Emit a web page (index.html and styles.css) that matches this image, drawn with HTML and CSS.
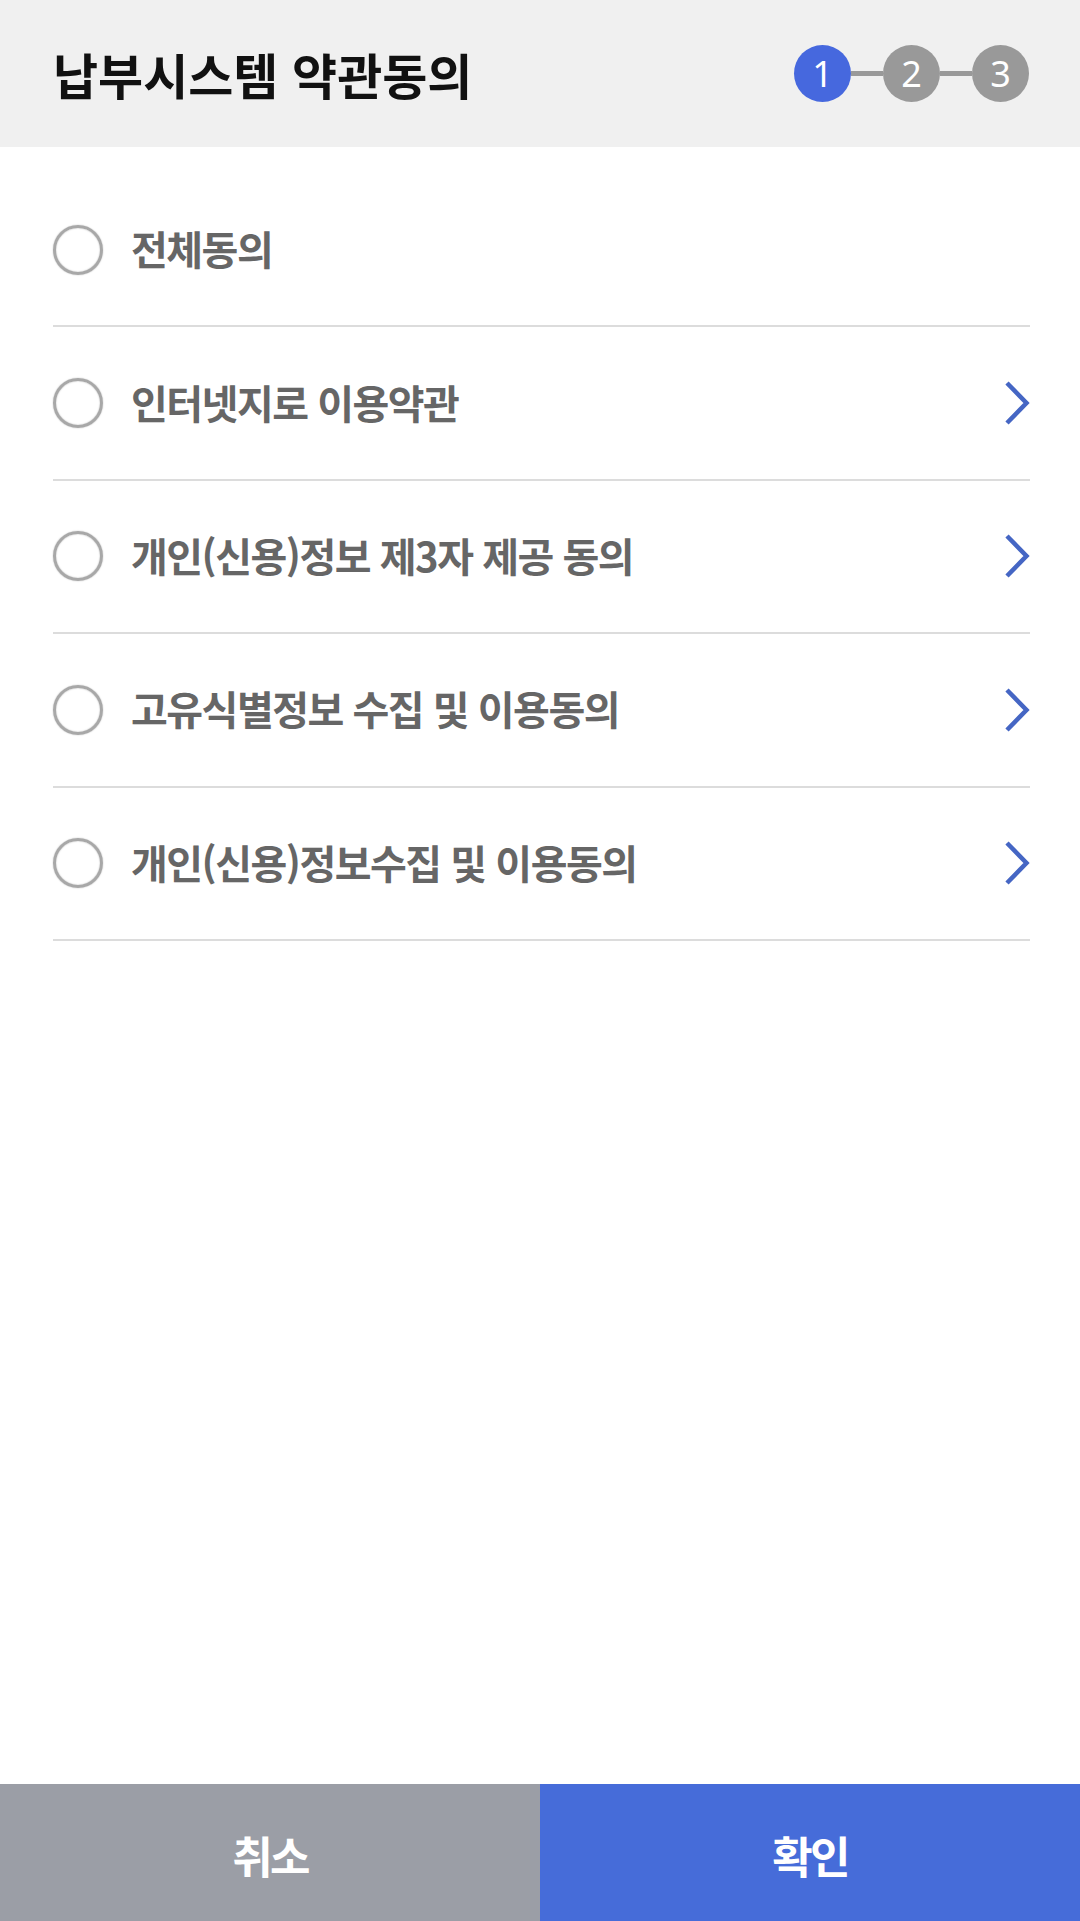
FILE: index.html
```html
<!DOCTYPE html>
<html lang="ko">
<head>
<meta charset="utf-8">
<title>납부시스템 약관동의</title>
<link rel="stylesheet" href="styles.css">
</head>
<body>
<div class="page">
  <header class="header">
    <h1 class="title">납부시스템 약관동의</h1>
    <div class="steps">
      <span class="step active">1</span>
      <span class="step-line"></span>
      <span class="step">2</span>
      <span class="step-line"></span>
      <span class="step">3</span>
    </div>
  </header>
  <main class="list">
    <div class="row">
      <span class="radio"></span>
      <span class="label">전체동의</span>
    </div>
    <div class="row">
      <span class="radio"></span>
      <span class="label">인터넷지로 이용약관</span>
      <svg class="chev" viewBox="0 0 26 46" width="26" height="46"><polyline points="3,3 22.5,23 3,43" fill="none" stroke="#4566c4" stroke-width="4.5"/></svg>
    </div>
    <div class="row">
      <span class="radio"></span>
      <span class="label">개인(신용)정보 제3자 제공 동의</span>
      <svg class="chev" viewBox="0 0 26 46" width="26" height="46"><polyline points="3,3 22.5,23 3,43" fill="none" stroke="#4566c4" stroke-width="4.5"/></svg>
    </div>
    <div class="row">
      <span class="radio"></span>
      <span class="label">고유식별정보 수집 및 이용동의</span>
      <svg class="chev" viewBox="0 0 26 46" width="26" height="46"><polyline points="3,3 22.5,23 3,43" fill="none" stroke="#4566c4" stroke-width="4.5"/></svg>
    </div>
    <div class="row">
      <span class="radio"></span>
      <span class="label">개인(신용)정보수집 및 이용동의</span>
      <svg class="chev" viewBox="0 0 26 46" width="26" height="46"><polyline points="3,3 22.5,23 3,43" fill="none" stroke="#4566c4" stroke-width="4.5"/></svg>
    </div>
  </main>
  <footer class="footer">
    <button class="btn cancel">취소</button>
    <button class="btn ok">확인</button>
  </footer>
</div>
</body>
</html>
```
FILE: styles.css
```css
html, body {
  margin: 0;
  padding: 0;
  background: #ffffff;
}
body {
  font-family: "Noto Sans CJK KR", "Noto Sans", sans-serif;
}
.page {
  display: flex;
  flex-direction: column;
  min-height: 1921px;
}
.header {
  height: 147px;
  background: #f0f0f0;
  display: flex;
  align-items: center;
  justify-content: space-between;
  padding: 0 51px 0 53px;
  box-sizing: border-box;
}
.title {
  margin: 0;
  font-size: 49px;
  font-weight: 700;
  color: #111111;
  letter-spacing: 0;
  line-height: 1;
}
.steps {
  display: flex;
  align-items: center;
}
.step {
  width: 57px;
  height: 57px;
  border-radius: 50%;
  background: #999999;
  color: #ffffff;
  display: flex;
  align-items: center;
  justify-content: center;
  font-family: "Noto Sans", sans-serif;
  font-size: 36px;
  font-weight: 400;
  line-height: 1;
}
.step.active {
  background: #4668de;
}
.step-line {
  width: 32px;
  height: 5px;
  background: #999999;
}
.list {
  flex: 1;
  padding: 27px 50px 0 53px;
}
.row {
  height: 151.4px;
  border-bottom: 2px solid #dcdcdc;
  display: flex;
  align-items: center;
}
.radio {
  width: 44px;
  height: 44px;
  border-radius: 50%;
  border: 3px solid #a8a8a8;
  box-shadow: 0 0 1.5px #b5b5b5, inset 0 0 1.5px #b5b5b5;
  flex: none;
}
.label {
  margin-left: 28px;
  font-size: 40px;
  font-weight: 700;
  color: #666666;
  letter-spacing: -1.5px;
  line-height: 1;
  margin-top: -3px;
}
.chev {
  margin-left: auto;
  flex: none;
}
.footer {
  display: flex;
  height: 137px;
}
.btn {
  flex: 1;
  border: none;
  margin: 0;
  color: #ffffff;
  font-family: "Noto Sans CJK KR", sans-serif;
  font-size: 44px;
  font-weight: 700;
  letter-spacing: -0.06em;
  padding-top: 6px;
}
.cancel {
  background: #9b9ea6;
}
.ok {
  background: #466cd9;
}
```
